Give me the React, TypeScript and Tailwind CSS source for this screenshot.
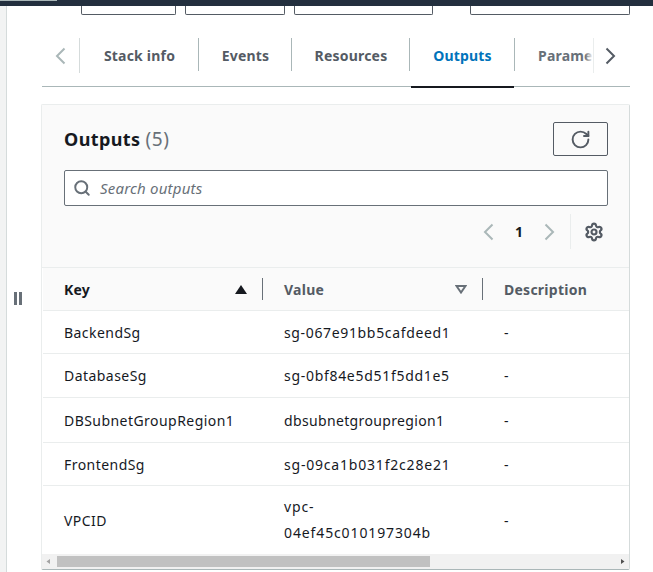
import { RotateCw, Search, Settings } from 'lucide-react';

const rows = [
  { key: 'BackendSg', value: 'sg-067e91bb5cafdeed1', height: 'h-[43px]', spacing: 'tracking-[0.65px]' },
  { key: 'DatabaseSg', value: 'sg-0bf84e5d51f5dd1e5', height: 'h-[44px]', spacing: 'tracking-[0.7px]' },
  { key: 'DBSubnetGroupRegion1', value: 'dbsubnetgroupregion1', height: 'h-[45px]', spacing: 'tracking-[0.35px]' },
  { key: 'FrontendSg', value: 'sg-09ca1b031f2c28e21', height: 'h-[43px]', spacing: 'tracking-[0.8px]' },
];

const tabs = [
  { label: 'Stack info', width: 'w-[119px]' },
  { label: 'Events', width: 'w-[93px]' },
  { label: 'Resources', width: 'w-[118px]' },
  { label: 'Outputs', width: 'w-[105px]', active: true },
];

function Chevron({ dir, color }: { dir: 'left' | 'right'; color: string }) {
  return (
    <svg width="11" height="18" viewBox="0 0 11 18" fill="none" stroke={color} strokeWidth="2" className="shrink-0">
      <path d={dir === 'left' ? 'M9.5 1.5 2 9l7.5 7.5' : 'M1.5 1.5 9 9l-7.5 7.5'} />
    </svg>
  );
}

function Tabs() {
  return (
    <div className="h-[49px] border-b border-[#aab7b8] flex relative">
      <div className="w-[38px] h-[35px] flex items-center pl-[13px] border-r border-[#d5dbdb] shrink-0">
        <Chevron dir="left" color="#aab7b8" />
      </div>
      {tabs.map((t) => (
        <div key={t.label} className={`${t.width} h-[49px] relative shrink-0 flex justify-center pt-[8px]`}>
          <span className={`text-[14px] leading-[20px] font-bold tracking-[0.2px] ${t.active ? 'text-[#0073bb]' : 'text-[#545b64]'}`}>{t.label}</span>
          <div className="absolute right-0 top-0 w-px h-[33px] bg-[#aab7b8]" />
          {t.active && <div className="absolute left-[1px] right-[1px] bottom-[-1px] h-[2px] bg-[#16191f]" />}
        </div>
      ))}
      <div className="w-[78px] h-[35px] overflow-hidden pl-[23px] pt-[8px] shrink-0 relative">
        <span className="block text-[14px] leading-[20px] font-bold tracking-[0.2px] text-[#687078] whitespace-nowrap">Parameters</span>
        <div className="absolute right-0 top-0 h-full w-[8px] bg-gradient-to-r from-white/0 to-white" />
      </div>
      <div className="w-[36px] h-[35px] border-l border-[#eaeded] flex items-center pl-[11px]">
        <Chevron dir="right" color="#545b64" />
      </div>
    </div>
  );
}

function HeaderCell({ label, dark, sort }: { label: string; dark?: boolean; sort?: 'up' | 'down' }) {
  return (
    <div className="w-[220px] shrink-0 h-full flex items-center pl-[21px] pr-[16px] justify-between relative">
      <span className={`text-[14px] font-bold tracking-[0.25px] ${dark ? 'text-[#16191f]' : 'text-[#545b64]'}`}>{label}</span>
      {sort === 'up' && (
        <svg width="12" height="9" viewBox="0 0 12 9"><path d="M6 0 12 9H0Z" fill="#16191f" /></svg>
      )}
      {sort === 'down' && (
        <svg width="12" height="9" viewBox="0 0 12 9"><path d="M1.5 1h9L6 7.5Z" fill="none" stroke="#687078" strokeWidth="2" /></svg>
      )}
      {sort && <div className="absolute right-0 top-[10px] h-[22px] w-px bg-[#687078]" />}
    </div>
  );
}

export default function App() {
  return (
    <div className="w-[653px] h-[572px] overflow-hidden bg-white font-['Noto_Sans','Open_Sans',sans-serif]">
      <div className="h-[6px] bg-[#232f3e]">
        <div className="h-px w-[57px] bg-[#aab7b8]" />
      </div>
      <div className="flex h-[566px]">
        <div className="w-[7px] bg-[#f2f3f3] border-r border-[#d5dbdb]" />
        <div className="w-[35px] flex gap-[2px] justify-start pl-[7px] pt-[286px]">
          <div className="w-[3px] h-[13px] bg-[#687078]" />
          <div className="w-[3px] h-[13px] bg-[#687078]" />
        </div>
        <div className="w-[588px]">
          <div className="flex h-[9px]">
            <div className="w-[39px]" />
            <div className="w-[95px] border border-t-0 border-[#545b64] rounded-b-[2px]" />
            <div className="w-[9px]" />
            <div className="w-[100px] border border-t-0 border-[#545b64] rounded-b-[2px]" />
            <div className="w-[9px]" />
            <div className="w-[139px] border border-t-0 border-[#545b64] rounded-b-[2px]" />
            <div className="w-[37px]" />
            <div className="w-[160px] border border-t-0 border-[#545b64] rounded-b-[2px]" />
          </div>
          <div className="pt-[23px]">
            <Tabs />
          </div>
          <div className="mt-[17px] -ml-px border border-[#eaeded] border-r-[#d5dbdb] border-b-[#aab7b8] rounded-[2px] h-[466px] overflow-hidden flex flex-col">
            <div className="h-[163px] bg-[#fafafa] border-b border-[#eaeded] pl-[22px] pr-[21px] pt-[17px] shrink-0">
              <div className="flex justify-between">
                <h2 className="text-[18px] leading-[34px] font-bold tracking-[0.4px] text-[#16191f]">
                  Outputs <span className="font-normal text-[19px] tracking-[0.6px] text-[#687078]">(5)</span>
                </h2>
                <button className="w-[55px] h-[34px] border border-[#545b64] rounded-[2px] flex items-center justify-center">
                  <RotateCw size={21} strokeWidth={2.2} className="text-[#545b64]" />
                </button>
              </div>
              <div className="mt-[14px] h-[36px] border border-[#687078] rounded-[2px] bg-white flex items-center pl-[8px] gap-[9px]">
                <Search size={18} strokeWidth={2.6} className="text-[#687078]" />
                <span className="text-[15px] italic tracking-[0.2px] text-[#687078]">Search outputs</span>
              </div>
              <div className="flex items-center justify-end h-[35px] mt-[8px] pr-[4px]">
                <Chevron dir="left" color="#aab7b8" />
                <span className="w-[50px] text-center text-[14px] font-bold text-[#16191f]">1</span>
                <Chevron dir="right" color="#aab7b8" />
                <div className="w-px h-[35px] bg-[#eaeded] ml-[15px] mr-[13px]" />
                <Settings size={20} strokeWidth={2.6} className="text-[#545b64]" />
              </div>
            </div>
            <div className="pl-px">
              <div className="flex h-[43px] border-b border-[#eaeded] bg-[#fafafa]">
                <HeaderCell label="Key" dark sort="up" />
                <HeaderCell label="Value" sort="down" />
                <HeaderCell label="Description" />
              </div>
              {rows.map((r) => (
                <div key={r.key} className={`flex ${r.height} items-center border-b border-[#eaeded] text-[14px] text-[#16191f]`}>
                  <div className="w-[220px] pl-[21px] shrink-0 tracking-[0.45px]">{r.key}</div>
                  <div className={`w-[220px] pl-[21px] shrink-0 ${r.spacing}`}>{r.value}</div>
                  <div className="pl-[21px]">-</div>
                </div>
              ))}
              <div className="flex h-[68px] items-center text-[14px] text-[#16191f]">
                <div className="w-[220px] pl-[21px] shrink-0 tracking-[0.45px]">VPCID</div>
                <div className="w-[220px] pl-[21px] shrink-0 leading-[26px] tracking-[0.88px]">vpc-<br />04ef45c010197304b</div>
                <div className="pl-[21px]">-</div>
              </div>
            </div>
            <div className="h-[15px] bg-[#f1f1f1] flex items-center shrink-0">
              <svg width="15" height="15" viewBox="0 0 15 15" className="shrink-0"><path d="M8 5v5L4.5 7.5Z" fill="#a3a3a3" /></svg>
              <div className="w-[373px] h-[11px] bg-[#c1c1c1]" />
              <div className="flex-1" />
              <svg width="14" height="15" viewBox="0 0 14 15" className="shrink-0"><path d="M6 5v5l3.5-2.5Z" fill="#505050" /></svg>
            </div>
          </div>
        </div>
      </div>
    </div>
  );
}
